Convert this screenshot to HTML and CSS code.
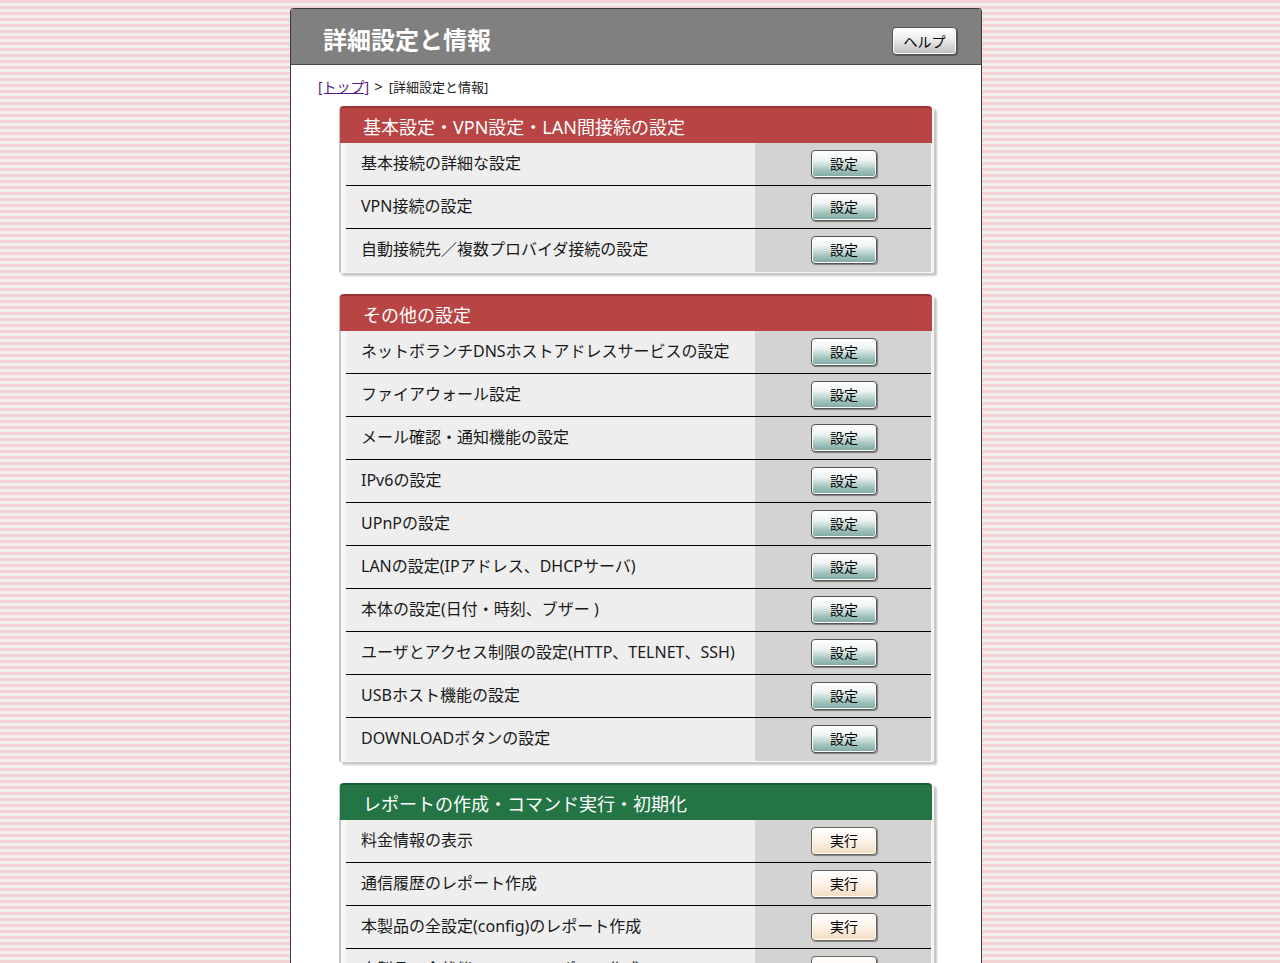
FILE: index.html
```html
<!DOCTYPE html>
<html lang="ja">

<head>
    <meta charset="UTF-8">
    <meta name="viewport" content="width=device-width, initial-scale=1.0">
    <title>詳細設定と情報</title>

    <link rel="stylesheet" href="styles.css">
</head>

<body>
    <div class="panel">
        <div class="head">
            <h1>詳細設定と情報</h1>
            <button class="help">ヘルプ</button>
        </div>

        <div class="crumb">
            <a href="#">[トップ]</a><span class="sep">&gt;</span>[詳細設定と情報]
        </div>

        <div class="sections">
            <div class="section">
                <h2 class="red">基本設定・VPN設定・LAN間接続の設定</h2>
                <div class="row"><span class="name">基本接続の詳細な設定</span><span class="act"><button class="set">設定</button></span></div>
                <div class="row"><span class="name">VPN接続の設定</span><span class="act"><button class="set">設定</button></span></div>
                <div class="row"><span class="name">自動接続先／複数プロバイダ接続の設定</span><span class="act"><button class="set">設定</button></span></div>
            </div>

            <div class="section">
                <h2 class="red">その他の設定</h2>
                <div class="row"><span class="name">ネットボランチDNSホストアドレスサービスの設定</span><span class="act"><button class="set">設定</button></span></div>
                <div class="row"><span class="name">ファイアウォール設定</span><span class="act"><button class="set">設定</button></span></div>
                <div class="row"><span class="name">メール確認・通知機能の設定</span><span class="act"><button class="set">設定</button></span></div>
                <div class="row"><span class="name">IPv6の設定</span><span class="act"><button class="set">設定</button></span></div>
                <div class="row"><span class="name">UPnPの設定</span><span class="act"><button class="set">設定</button></span></div>
                <div class="row"><span class="name">LANの設定(IPアドレス、DHCPサーバ)</span><span class="act"><button class="set">設定</button></span></div>
                <div class="row"><span class="name">本体の設定(日付・時刻、ブザー )</span><span class="act"><button class="set">設定</button></span></div>
                <div class="row"><span class="name">ユーザとアクセス制限の設定(HTTP、TELNET、SSH)</span><span class="act"><button class="set">設定</button></span></div>
                <div class="row"><span class="name">USBホスト機能の設定</span><span class="act"><button class="set">設定</button></span></div>
                <div class="row"><span class="name">DOWNLOADボタンの設定</span><span class="act"><button class="set">設定</button></span></div>
            </div>

            <div class="section">
                <h2 class="green">レポートの作成・コマンド実行・初期化</h2>
                <div class="row"><span class="name">料金情報の表示</span><span class="act"><button class="run">実行</button></span></div>
                <div class="row"><span class="name">通信履歴のレポート作成</span><span class="act"><button class="run">実行</button></span></div>
                <div class="row"><span class="name">本製品の全設定(config)のレポート作成</span><span class="act"><button class="run">実行</button></span></div>
                <div class="row"><span class="name">本製品の全状態(status)のレポート作成</span><span class="act"><button class="run">実行</button></span></div>
            </div>
        </div>
    </div>
</body>

</html>
```

FILE: styles.css
```css
* {
    margin: 0;
    padding: 0;
    box-sizing: border-box;
}

body {
    font-family: "Noto Sans", "Noto Sans CJK JP", sans-serif;
    color: #1a1a1a;
    background: repeating-linear-gradient(to bottom, #f3d3d3 0, #f3d3d3 3px, #f3eeee 3px, #f3eeee 6px);
    min-height: 963px;
}

.panel {
    width: 692px;
    margin: 8px 0 0 290px;
    background: #fff;
    border: 1px solid #3a3a3a;
    border-bottom: none;
    border-radius: 4px 4px 0 0;
    min-height: 1000px;
}

/* 上のグレーのバー */
.head {
    height: 56px;
    padding: 7px 24px 0 32px;
    background: #808080;
    border-bottom: 1px solid #4a4a4a;
    border-radius: 3px 3px 0 0;
    display: flex;
    align-items: center;
    justify-content: space-between;
}

.head h1 {
    font-size: 24px;
    font-weight: bold;
    color: #fff;
    line-height: 30px;
}

.help {
    width: 65px;
    height: 28px;
    margin-top: 2px;
    font-family: inherit;
    font-size: 14px;
    color: #000;
    border: 1px solid #555;
    border-radius: 4px;
    background: linear-gradient(#ffffff 0%, #f2f2f2 35%, #bdbdbd 100%);
    box-shadow: inset 0 0 0 1px #fff, 1px 1px 1px rgba(0, 0, 0, .35);
    cursor: pointer;
}

.crumb {
    padding: 11px 0 0 27px;
    font-size: 13px;
    line-height: 20px;
    color: #222;
}

.crumb a {
    font-size: 14px;
    color: #551a8b;
}

.crumb .sep {
    font-size: 15px;
    margin: 0 6px 0 5px;
}

.sections {
    padding: 9px 0 0 48px;
}

.section {
    width: 595px;
    margin-bottom: 21px;
    background: #f6f6f6;
    border-left: 2px solid #c4c4c4;
    border-radius: 4px 4px 2px 2px;
    padding: 0 3px 1px 5px;
    box-shadow: 3px 3px 2px rgba(0, 0, 0, .22);
}

.section h2 {
    height: 37px;
    margin: 0 -1px 0 -6px;
    padding: 4px 0 0 23px;
    font-size: 18px;
    font-weight: normal;
    line-height: 30px;
    color: #fff;
    border-radius: 4px 4px 0 0;
}

.section h2.red {
    background: #b94444;
    border-top: 2px solid #9c3333;
}

.section h2.green {
    background: #237545;
    border-top: 2px solid #1a5c35;
}

.row {
    display: flex;
    height: 43px;
    border-bottom: 1px solid #000;
}

.row:last-child {
    border-bottom: none;
}

.row .name {
    width: 409px;
    background: #eeeeee;
    padding-left: 15px;
    font-size: 16px;
    line-height: 41px;
}

.row .act {
    flex: 1;
    background: #d3d3d3;
    padding: 7px 0 0 56px;
}

.row button {
    width: 66px;
    height: 28px;
    font-family: inherit;
    font-size: 14px;
    line-height: 24px;
    color: #000;
    border: 1px solid #555;
    border-radius: 4px;
    box-shadow: inset 0 0 0 1px #fff, 1px 1px 1px rgba(0, 0, 0, .4);
    cursor: pointer;
}

/* 設定ボタン */
.row .set {
    background: linear-gradient(#ffffff 0%, #eef4f3 35%, #9fc1bb 75%, #7ea7a0 100%);
}

/* 実行ボタン */
.row .run {
    background: linear-gradient(#ffffff 0%, #fdf6ee 40%, #f3dcc2 100%);
    border-color: #6d6256;
}
```
